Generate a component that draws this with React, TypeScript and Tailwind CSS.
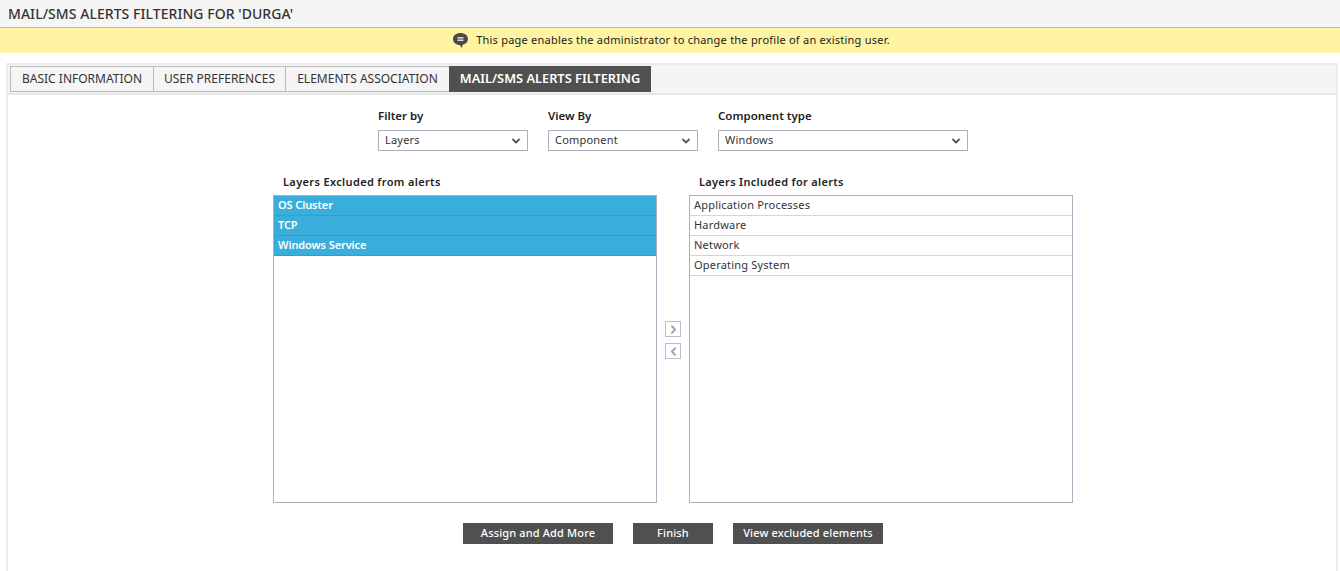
import { ChevronDown, ChevronLeft, ChevronRight } from "lucide-react";

const font = "font-['Noto_Sans','Open_Sans',sans-serif]";

const tabs = [
  { label: "BASIC INFORMATION", width: "w-[143px]" },
  { label: "USER PREFERENCES", width: "w-[132px]" },
  { label: "ELEMENTS ASSOCIATION", width: "w-[164px]" },
];

const filters = [
  { label: "Filter by", value: "Layers", width: "w-[150px]" },
  { label: "View By", value: "Component", width: "w-[150px]" },
  { label: "Component type", value: "Windows", width: "w-[250px]" },
];

const excluded = ["OS Cluster", "TCP", "Windows Service"];
const included = ["Application Processes", "Hardware", "Network", "Operating System"];

function Select({ label, value, width }: { label: string; value: string; width: string }) {
  return (
    <div className={width}>
      <div className="h-[20px] text-[11.5px] leading-[22px] font-semibold text-[#222]">{label}</div>
      <div className="mt-[5px] flex h-[21px] items-center justify-between border border-[#abb0bf] bg-white pr-[5px] pl-[6px] text-[11px] tracking-[0.2px] text-[#333]">
        <span>{value}</span>
        <ChevronDown className="h-[12px] w-[12px] text-[#555]" strokeWidth={3.6} aria-hidden="true" />
      </div>
    </div>
  );
}

function ArrowButton({ children }: { children: React.ReactNode }) {
  return (
    <div className="flex h-[16px] w-[16px] items-center justify-center border border-[#b9bdc9] bg-white text-[#a0a4b2]">
      {children}
    </div>
  );
}

export default function App() {
  return (
    <div className={`h-[571px] w-[1340px] overflow-hidden bg-white ${font}`}>
      <div className="flex h-[28px] items-center border-b border-[#b5b5b5] bg-[#f5f5f5] pb-[1px] pl-[8px] text-[14px] font-medium tracking-[0.05px] text-[#333]">
        MAIL/SMS ALERTS FILTERING FOR 'DURGA'
      </div>
      <div className="flex h-[25px] items-center justify-center gap-[7px] bg-[#fff4a3] pl-[2px] text-[11px] tracking-[0.23px] text-[#222]">
        <svg width="17" height="17" viewBox="0 0 17 17" aria-hidden="true">
          <path d="M8.5 1C4.2 1 1 3.5 1 7s3.2 6 6.6 6l2.4 3 .6-3.2C13.8 12 16 9.8 16 7c0-3.5-3.2-6-7.5-6z" fill="#4a4a4a" />
          <rect x="5.5" y="5.3" width="6" height="1.2" fill="#fff" />
          <rect x="5.5" y="7.6" width="6" height="1.2" fill="#fff" />
        </svg>
        <span>This page enables the administrator to change the profile of an existing user.</span>
      </div>

      <div className="mt-[10px] mr-[2px] ml-[6px] h-[508px] border-x-2 border-t-2 border-[#ececec]">
        <div className="flex h-[30px] items-center border-b-2 border-[#e8e8e8] bg-[#f5f5f5] pl-[2px]">
          <div className="flex h-[26px]">
            {tabs.map((tab) => (
              <div
                key={tab.label}
                className={`flex items-center justify-center border-y border-l border-[#b9b9b9] bg-[#f5f5f5] text-[12px] text-[#333] ${tab.width}`}
              >
                {tab.label}
              </div>
            ))}
            <div className="flex w-[202px] items-center justify-center bg-[#505050] text-[12.8px] font-semibold text-white">
              MAIL/SMS ALERTS FILTERING
            </div>
          </div>
        </div>

        <div className="flex justify-center gap-[20px] pt-[10px] pl-[2px]">
          {filters.map((f) => (
            <Select key={f.label} {...f} />
          ))}
        </div>

        <div className="mt-[21px] flex justify-center pl-[2px]">
          <div className="w-[384px]">
            <div className="h-[23px] pl-[10px] text-[11px] leading-[20px] font-semibold tracking-[0.35px] text-[#222]">
              Layers Excluded from alerts
            </div>
            <div className="h-[308px] border border-[#abb0bf] bg-white">
              {excluded.map((row) => (
                <div
                  key={row}
                  className="flex h-[20px] items-center border-b border-[#2f9fcb] bg-[#3aaedb] pl-[4px] text-[11px] font-semibold tracking-[-0.1px] text-white"
                >
                  {row}
                </div>
              ))}
            </div>
          </div>

          <div className="flex w-[32px] flex-col items-center gap-[6px] pt-[149px]">
            <ArrowButton>
              <ChevronRight className="h-[13px] w-[13px]" strokeWidth={3.4} aria-hidden="true" />
            </ArrowButton>
            <ArrowButton>
              <ChevronLeft className="h-[13px] w-[13px]" strokeWidth={3.4} aria-hidden="true" />
            </ArrowButton>
          </div>

          <div className="w-[384px]">
            <div className="h-[23px] pl-[10px] text-[11px] leading-[20px] font-semibold tracking-[0.3px] text-[#222]">
              Layers Included for alerts
            </div>
            <div className="h-[308px] border border-[#abb0bf] bg-white">
              {included.map((row) => (
                <div
                  key={row}
                  className="flex h-[20px] items-center border-b border-[#d5d5d5] pl-[4px] text-[11px] tracking-[0.2px] text-[#333]"
                >
                  {row}
                </div>
              ))}
            </div>
          </div>
        </div>

        <div className="mt-[20px] flex justify-center gap-[20px] pl-[2px]">
          <div className="flex h-[21px] w-[150px] items-center justify-center bg-[#505050] text-[11px] font-medium tracking-[0.15px] text-white">
            Assign and Add More
          </div>
          <div className="flex h-[21px] w-[80px] items-center justify-center bg-[#505050] text-[11px] font-medium tracking-[0.15px] text-white">
            Finish
          </div>
          <div className="flex h-[21px] w-[150px] items-center justify-center bg-[#505050] text-[11px] font-medium tracking-[0.15px] text-white">
            View excluded elements
          </div>
        </div>
      </div>
    </div>
  );
}
